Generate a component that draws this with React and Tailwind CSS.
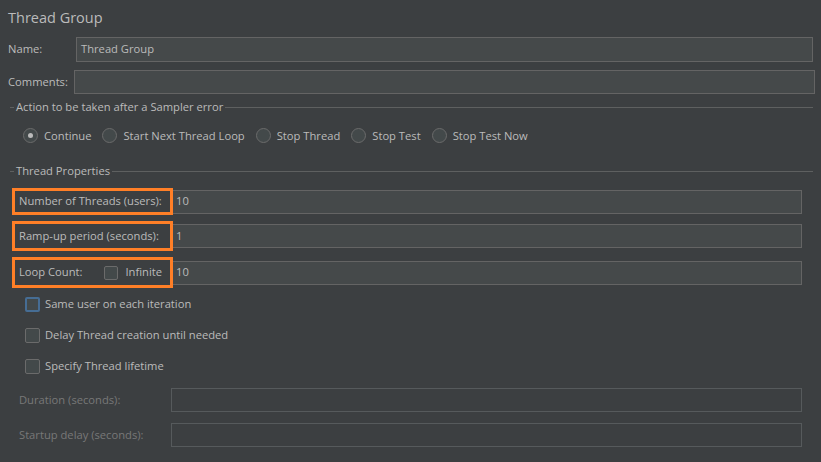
const font = { fontFamily: '"Open Sans", "Noto Sans", sans-serif' };

function Field({ value = "", disabled = false, className = "" }) {
  return (
    <div
      className={`flex items-center px-[4px] text-[11.2px] text-[#bbbbbb] border ${
        disabled ? "bg-[#3c3f41] border-[#565a5c]" : "bg-[#45494a] border-[#646464]"
      } ${className}`}
    >
      {value}
    </div>
  );
}

function SectionTitle({ children }) {
  return (
    <div className="flex items-center h-[16px] pl-[10px] pr-[8px]">
      <div className="w-[4px] h-px bg-[#5e6060]" />
      <span className="px-[2px] text-[11.2px] text-[#bbbbbb] whitespace-nowrap">{children}</span>
      <div className="flex-1 h-px bg-[#5e6060]" />
    </div>
  );
}

function Radio({ label, checked }) {
  return (
    <div className="flex items-center mr-[11px]">
      <div className="w-[15px] h-[15px] rounded-full border border-[#6b6b6b] bg-[#43494a] flex items-center justify-center">
        {checked && <div className="w-[5px] h-[5px] rounded-full bg-[#bbbbbb]" />}
      </div>
      <span className="ml-[6px] text-[11.2px] text-[#bbbbbb] whitespace-nowrap">{label}</span>
    </div>
  );
}

function Check({ label, focused }) {
  return (
    <div className="flex items-center h-[20px] pl-[25px]">
      <div
        className={`w-[15px] h-[15px] rounded-[2px] bg-[#43494a] ${
          focused ? "border-2 border-[#466d94]" : "border border-[#6b6b6b]"
        }`}
      />
      <span className="ml-[5px] text-[11.2px] text-[#bbbbbb]">{label}</span>
    </div>
  );
}

function PropRow({ height, children, value, className = "" }) {
  return (
    <div className={`flex items-center pl-[12px] pr-[19px] ${className}`}>
      <div
        className={`relative z-10 w-[161px] shrink-0 flex items-center whitespace-nowrap border-[3px] border-[#ff7f27] bg-[#3c3f41] pl-[4px] text-[11.2px] text-[#bbbbbb] ${height}`}
      >
        {children}
      </div>
      <Field value={value} className="flex-1 h-[24px] ml-[-2px]" />
    </div>
  );
}

export default function App() {
  return (
    <div className="w-[821px] h-[462px] bg-[#3c3f41] overflow-hidden" style={font}>
      <div className="h-[30px] pl-[8px] pt-[8px] text-[14.5px] leading-[20px] text-[#bbbbbb]">
        Thread Group
      </div>

      <div className="flex items-center mt-[7px] h-[25px] pl-[8px] pr-[8px]">
        <span className="w-[68px] text-[11.2px] text-[#bbbbbb]">Name:</span>
        <Field value="Thread Group" className="flex-1 h-[25px]" />
      </div>

      <div className="flex items-center mt-[8px] h-[24px] pl-[8px] pr-[6px]">
        <span className="w-[66px] text-[11.2px] text-[#bbbbbb]">Comments:</span>
        <Field className="flex-1 h-[24px]" />
      </div>

      <div className="mt-[5px]">
        <SectionTitle>Action to be taken after a Sampler error</SectionTitle>
      </div>

      <div className="flex items-center h-[20px] mt-[11px] pl-[23px]">
        <Radio label="Continue" checked />
        <Radio label="Start Next Thread Loop" />
        <Radio label="Stop Thread" />
        <Radio label="Stop Test" />
        <Radio label="Stop Test Now" />
      </div>

      <div className="mt-[17px]">
        <SectionTitle>Thread Properties</SectionTitle>
      </div>

      <PropRow height="h-[27px]" value="10" className="mt-[9px]">
        Number of Threads (users):
      </PropRow>
      <PropRow height="h-[30px]" value="1" className="mt-[6px]">
        Ramp-up period (seconds):
      </PropRow>
      <PropRow height="h-[31px]" value="10" className="mt-[6px]">
        <span>Loop Count:</span>
        <div className="ml-[22px] w-[14px] h-[14px] rounded-[2px] border border-[#6b6b6b] bg-[#43494a]" />
        <span className="ml-[7px]">Infinite</span>
      </PropRow>

      <div className="mt-[6px]">
        <Check label="Same user on each iteration" focused />
      </div>
      <div className="mt-[11px]">
        <Check label="Delay Thread creation until needed" />
      </div>
      <div className="mt-[11px]">
        <Check label="Specify Thread lifetime" />
      </div>

      <div className="flex items-center mt-[12px] h-[24px] pl-[19px] pr-[19px]">
        <span className="w-[152px] text-[11.2px] text-[#787878]">Duration (seconds):</span>
        <Field disabled className="flex-1 h-[24px]" />
      </div>
      <div className="flex items-center mt-[11px] h-[24px] pl-[19px] pr-[19px]">
        <span className="w-[152px] text-[11.2px] text-[#787878]">Startup delay (seconds):</span>
        <Field disabled className="flex-1 h-[24px]" />
      </div>
    </div>
  );
}
